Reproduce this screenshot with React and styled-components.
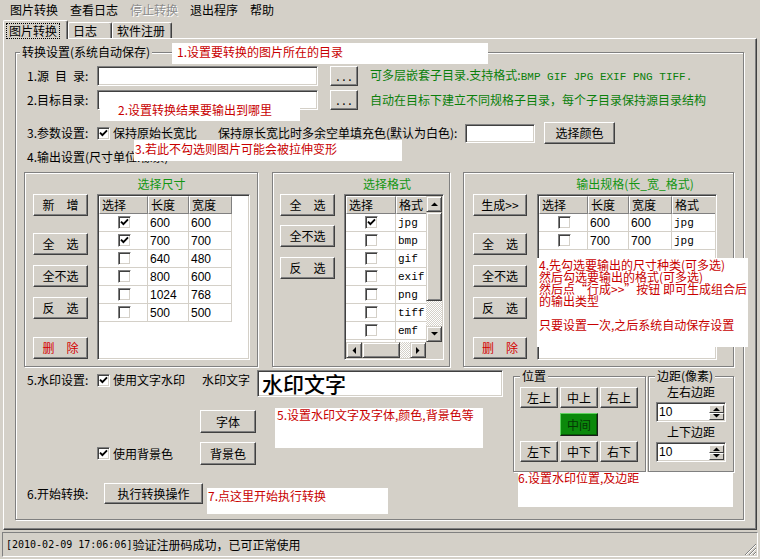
import React from 'react'
import styled, { createGlobalStyle } from 'styled-components'

const GlobalStyle = createGlobalStyle`
  html, body {
    margin: 0;
    padding: 0;
    background: #d4d0c8;
  }
  body {
    font-family: "Noto Sans CJK SC", "Liberation Sans", sans-serif;
    font-size: 12px;
    color: #000;
  }
  * { box-sizing: border-box; }
`

const Window = styled.div`
  position: relative;
  width: 760px;
  height: 559px;
  overflow: hidden;
  background: #d4d0c8;
  display: flex;
  flex-direction: column;
`

const MenuBar = styled.div`
  display: flex;
  height: 20px;
  padding-left: 4px;
`
const MenuItem = styled.div`
  padding: 0 6px;
  line-height: 20px;
  color: ${p => (p.$disabled ? '#8c8c8c' : '#000')};
  text-shadow: ${p => (p.$disabled ? '1px 1px 0 #fff' : 'none')};
`

const TabStrip = styled.div`
  display: flex;
  align-items: flex-end;
  height: 18px;
  padding-left: 3px;
  position: relative;
  z-index: 1;
`
const Tab = styled.div`
  width: ${p => p.$w}px;
  height: ${p => (p.$active ? 19 : 16)}px;
  margin-bottom: ${p => (p.$active ? -1 : 0)}px;
  padding: ${p => (p.$active ? '2px 0 0 3px' : '0 0 0 4px')};
  background: #d4d0c8;
  border-top: 1px solid #fff;
  border-left: 1px solid #fff;
  border-right: 1px solid #404040;
  border-radius: 2px 2px 0 0;
  box-shadow: inset -1px 0 0 #808080;
  line-height: 15px;
`
const Focus = styled.span`
  display: inline-block;
  outline: 1px dotted #000;
  padding: 0 2px;
  line-height: 14px;
`

const TabPage = styled.div`
  margin: 0 3px;
  height: 492px;
  border: 1px solid;
  border-color: #fff #404040 #404040 #fff;
  box-shadow: inset -1px -1px 0 #808080;
  padding: 5px 0 0 11px;
`

const Group = styled.fieldset`
  margin: 0;
  padding: 0;
  min-inline-size: 0;
  width: ${p => p.$w}px;
  height: ${p => p.$h}px;
  border: 1px solid #808080;
  box-shadow: inset 1px 1px 0 #fff, 1px 1px 0 #fff;
`
const Legend = styled.legend`
  padding: 0 2px;
  margin-left: ${p => p.$ml}px;
  line-height: 16px;
  background: #d4d0c8;
`

const Content = styled.div`
  padding: 6px 0 0 8px;
`
const Row = styled.div`
  display: flex;
  align-items: ${p => p.$align || 'center'};
  height: ${p => p.$h}px;
  margin-top: ${p => p.$mt || 0}px;
`
const Label = styled.span`
  width: ${p => p.$w || 70}px;
  margin-left: 3px;
  flex-shrink: 0;
  white-space: nowrap;
  line-height: ${p => p.$lh || 16}px;
`
const Text = styled.span`
  width: ${p => (p.$w ? `${p.$w}px` : 'auto')};
  margin-left: ${p => p.$ml || 0}px;
  margin-top: ${p => p.$mt || 0}px;
  flex-shrink: 0;
  white-space: nowrap;
  line-height: ${p => p.$lh || 16}px;
  color: ${p => (p.$green ? '#0a7f0a' : '#000')};
`
const Mono = styled.span`
  font-family: "Liberation Mono", monospace;
  font-size: 11px;
`

const Field = styled.div`
  width: ${p => p.$w}px;
  height: ${p => p.$h}px;
  margin-left: ${p => p.$ml || 0}px;
  flex-shrink: 0;
  background: #fff;
  border: 1px solid;
  border-color: #808080 #fff #fff #808080;
  box-shadow: inset 1px 1px 0 #404040, inset -1px -1px 0 #d4d0c8;
`
const BigField = styled(Field)`
  padding: 0 0 0 4px;
  font-size: 21px;
  line-height: 24px;
  font-weight: 500;
`

const Btn = styled.button`
  font: inherit;
  font-size: 12px;
  width: ${p => p.$w}px;
  height: ${p => p.$h || 22}px;
  margin-top: ${p => p.$mt || 0}px;
  margin-left: ${p => p.$ml || 0}px;
  padding: 0;
  flex-shrink: 0;
  background: ${p => (p.$green ? '#0b890b' : '#d4d0c8')};
  color: ${p => (p.$red ? '#d40000' : p.$green ? '#053805' : '#000')};
  border: 1px solid;
  border-color: ${p => (p.$green ? '#5fd35f #1b1b1b #1b1b1b #5fd35f' : '#fff #404040 #404040 #fff')};
  box-shadow: inset -1px -1px 0 ${p => (p.$green ? '#055a05' : '#808080')};
  line-height: 1;
  white-space: pre;
`

const CheckBox = styled.span`
  width: 13px;
  height: 13px;
  flex-shrink: 0;
  margin-top: ${p => p.$mt || 0}px;
  margin-left: ${p => p.$ml || 0}px;
  background: #fff;
  border: 1px solid;
  border-color: #808080 #fff #fff #808080;
  box-shadow: inset 1px 1px 0 #404040, inset -1px -1px 0 #d4d0c8;
  display: inline-flex;
  align-items: center;
  justify-content: center;
`
const Check = ({ on, mt, ml }) => (
  <CheckBox $mt={mt} $ml={ml}>
    {on && (
      <svg width="9" height="9" viewBox="0 0 9 9">
        <path d="M1 3.6 L3.4 6.2 L8 1.4" fill="none" stroke="#000" strokeWidth="1.9" />
      </svg>
    )}
  </CheckBox>
)

const Panels = styled.div`
  display: flex;
  margin-top: 6px;
  height: 195px;
`
const Panel = styled.div`
  width: ${p => p.$w}px;
  margin-left: ${p => p.$ml || 0}px;
  height: 195px;
  border: 1px solid #808080;
  box-shadow: inset 1px 1px 0 #fff, 1px 1px 0 #fff;
  display: flex;
  padding-left: ${p => p.$pl}px;
`
const BtnCol = styled.div`
  display: flex;
  flex-direction: column;
  padding-top: 21px;
  width: ${p => p.$w}px;
  margin-right: ${p => p.$gap}px;
`
const GridCol = styled.div`
  display: flex;
  flex-direction: column;
`
const PanelTitle = styled.div`
  height: 21px;
  line-height: 22px;
  color: #139613;
  text-align: center;
  white-space: nowrap;
  padding-left: ${p => (p.$shift > 0 ? p.$shift * 2 : 0)}px;
  padding-right: ${p => (p.$shift < 0 ? -p.$shift * 2 : 0)}px;
`
const GridFrame = styled.div`
  width: ${p => p.$w}px;
  height: 166px;
  background: #fff;
  border: 1px solid;
  border-color: #808080 #fff #fff #808080;
  box-shadow: inset 1px 1px 0 #404040, inset -1px -1px 0 #d4d0c8;
  padding: 1px;
  display: flex;
  flex-direction: column;
  overflow: hidden;
`
const GridBody = styled.div`
  flex: 1;
  display: flex;
  min-height: 0;
`
const TableArea = styled.div`
  flex: 1;
  overflow: hidden;
`
const TRow = styled.div`
  display: flex;
  height: 18px;
`
const HCell = styled.div`
  width: ${p => p.$w}px;
  flex-shrink: 0;
  background: #d4d0c8;
  border-top: 1px solid #fff;
  border-left: 1px solid #fff;
  border-right: 1px solid #808080;
  border-bottom: 1px solid #808080;
  padding-left: 2px;
  line-height: 16px;
  white-space: nowrap;
  overflow: hidden;
`
const Cell = styled.div`
  width: ${p => p.$w}px;
  flex-shrink: 0;
  border-right: 1px solid #d4d0c8;
  border-bottom: 1px solid #d4d0c8;
  padding-left: 2px;
  display: flex;
  align-items: center;
  justify-content: ${p => (p.$center ? 'center' : 'flex-start')};
  font-family: ${p => (p.$mono ? '"Liberation Mono", monospace' : '"Liberation Sans", sans-serif')};
  font-size: ${p => (p.$mono ? 11 : 12)}px;
`

const ScrollBtn = styled.div`
  width: 16px;
  height: ${p => p.$len || 16}px;
  flex-shrink: 0;
  background: #d4d0c8;
  border: 1px solid;
  border-color: #d4d0c8 #404040 #404040 #d4d0c8;
  box-shadow: inset 1px 1px 0 #fff, inset -1px -1px 0 #808080;
  display: flex;
  align-items: center;
  justify-content: center;
`
const HScrollBtn = styled(ScrollBtn)`
  width: ${p => p.$len || 16}px;
  height: 16px;
`
const Track = styled.div`
  flex: 1;
  background-image: repeating-conic-gradient(#fff 0 25%, #d4d0c8 0 50%);
  background-size: 2px 2px;
`
const VScroll = styled.div`
  width: 16px;
  display: flex;
  flex-direction: column;
`
const HScrollRow = styled.div`
  display: flex;
  height: 16px;
`
const HScroll = styled.div`
  flex: 1;
  display: flex;
`
const Corner = styled.div`
  width: 16px;
  background: #d4d0c8;
`

const Arrow = ({ dir }) => {
  const pts = {
    up: '0,4 7,4 3.5,0.5',
    down: '0,0 7,0 3.5,3.5',
    left: '4,0 4,7 0.5,3.5',
    right: '0,0 0,7 3.5,3.5',
  }[dir]
  const vertical = dir === 'up' || dir === 'down'
  return (
    <svg width={vertical ? 7 : 4} height={vertical ? 4 : 7}>
      <polygon points={pts} fill="#000" />
    </svg>
  )
}

const Lower = styled.div`
  display: flex;
`
const LeftCol = styled.div`
  width: 489px;
  display: flex;
  flex-direction: column;
`
const RightCol = styled.div`
  display: flex;
  gap: 2px;
  margin-top: 1px;
  align-items: flex-start;
`
const PosGrid = styled.div`
  display: grid;
  grid-template-columns: repeat(3, 38px);
  grid-template-rows: 21px 23px 21px;
  column-gap: 2px;
  row-gap: 5px;
  margin: 3px 0 0 6px;
`
const PosBtn = styled(Btn)`
  width: 38px;
  height: 100%;
  grid-column: ${p => p.$col || 'auto'};
`
const MarginBody = styled.div`
  display: flex;
  flex-direction: column;
  align-items: center;
`
const SpinBox = styled.div`
  width: 70px;
  height: 20px;
  margin-top: 2px;
  display: flex;
  background: #fff;
  border: 1px solid;
  border-color: #808080 #fff #fff #808080;
  box-shadow: inset 1px 1px 0 #404040, inset -1px -1px 0 #d4d0c8;
  padding: 2px 1px 1px 2px;
`
const SpinText = styled.div`
  flex: 1;
  line-height: 14px;
  font-family: "Liberation Sans", sans-serif;
  font-size: 12px;
`
const SpinBtns = styled.div`
  width: 15px;
  display: flex;
  flex-direction: column;
`
const SpinBtn = styled.div`
  flex: 1;
  background: #d4d0c8;
  border: 1px solid;
  border-color: #fff #404040 #404040 #fff;
  display: flex;
  align-items: center;
  justify-content: center;
`

const StatusBar = styled.div`
  margin: 2px 2px 0;
  height: 25px;
  border: 1px solid;
  border-color: #808080 #fff #fff #808080;
  display: flex;
  align-items: center;
  padding-left: 3px;
`
const StatusMono = styled.span`
  font-family: "DejaVu Sans Mono", monospace;
  font-size: 10px;
`
const Grip = styled.svg`
  margin-left: auto;
  align-self: flex-end;
`

const Note = styled.div`
  position: absolute;
  left: ${p => p.$x}px;
  top: ${p => p.$y}px;
  width: ${p => p.$w}px;
  height: ${p => p.$h}px;
  background: #fff;
  color: #c80000;
  padding: ${p => p.$pad || '0'};
  line-height: ${p => p.$lh || 16}px;
  white-space: pre;
  z-index: 5;
`

const sizes = [
  ['600', '600', true],
  ['700', '700', true],
  ['640', '480', false],
  ['800', '600', false],
  ['1024', '768', false],
  ['500', '500', false],
]
const formats = [['jpg', true], ['bmp'], ['gif'], ['exif'], ['png'], ['tiff'], ['emf'], ['']]
const outputs = [
  ['600', '600', 'jpg'],
  ['700', '700', 'jpg'],
]

const Spin = ({ value }) => (
  <SpinBox>
    <SpinText>{value}</SpinText>
    <SpinBtns>
      <SpinBtn><Arrow dir="up" /></SpinBtn>
      <SpinBtn><Arrow dir="down" /></SpinBtn>
    </SpinBtns>
  </SpinBox>
)

export default function App() {
  return (
    <Window>
      <GlobalStyle />
      <MenuBar>
        <MenuItem>图片转换</MenuItem>
        <MenuItem>查看日志</MenuItem>
        <MenuItem $disabled>停止转换</MenuItem>
        <MenuItem>退出程序</MenuItem>
        <MenuItem>帮助</MenuItem>
      </MenuBar>
      <TabStrip>
        <Tab $w={65} $active><Focus>图片转换</Focus></Tab>
        <Tab $w={44}>日志</Tab>
        <Tab $w={60}>软件注册</Tab>
      </TabStrip>
      <TabPage>
        <Group $w={729} $h={476}>
          <Legend $ml={4}>转换设置(系统自动保存)</Legend>
          <Content>
            <Row $h={20}>
              <Label>1.源{'\u2002'}目{'\u2002'}录:</Label>
              <Field $w={221} $h={20} />
              <Btn $w={28} $h={20} $ml={12}>. . .</Btn>
              <Text $ml={12} $green>
                可多层嵌套子目录.支持格式:<Mono>BMP GIF JPG EXIF PNG TIFF.</Mono>
              </Text>
            </Row>
            <Row $h={20} $mt={4}>
              <Label>2.目标目录:</Label>
              <Field $w={221} $h={20} />
              <Btn $w={28} $h={20} $ml={12}>. . .</Btn>
              <Text $ml={12} $green>自动在目标下建立不同规格子目录，每个子目录保持源目录结构</Text>
            </Row>
            <Row $h={22} $mt={12}>
              <Label>3.参数设置:</Label>
              <Check on />
              <Text $ml={3} $w={105}>保持原始长宽比</Text>
              <Text $w={247}>保持原长宽比时多余空单填充色(默认为白色):</Text>
              <Field $w={70} $h={19} />
              <Btn $w={71} $h={22} $ml={9}>选择颜色</Btn>
            </Row>
            <Row $h={18} $mt={4}>
              <Label $w={200}>4.输出设置(尺寸单位:像素)</Label>
            </Row>
            <Panels>
              <Panel $w={234} $pl={8}>
                <BtnCol $w={55} $gap={9}>
                  <Btn $w={55}>新{'\u3000'}增</Btn>
                  <Btn $w={55} $mt={17}>全{'\u3000'}选</Btn>
                  <Btn $w={55} $mt={10}>全不选</Btn>
                  <Btn $w={55} $mt={10}>反{'\u3000'}选</Btn>
                  <Btn $w={55} $mt={18} $red>删{'\u3000'}除</Btn>
                </BtnCol>
                <GridCol>
                  <PanelTitle $shift={-12}>选择尺寸</PanelTitle>
                  <GridFrame $w={153}>
                    <TableArea>
                      <TRow>
                        <HCell $w={49}>选择</HCell>
                        <HCell $w={41}>长度</HCell>
                        <HCell $w={43}>宽度</HCell>
                      </TRow>
                      {sizes.map(([l, w, on]) => (
                        <TRow key={l + w}>
                          <Cell $w={49} $center><Check on={on} /></Cell>
                          <Cell $w={41}>{l}</Cell>
                          <Cell $w={43}>{w}</Cell>
                        </TRow>
                      ))}
                    </TableArea>
                  </GridFrame>
                </GridCol>
              </Panel>
              <Panel $w={178} $ml={14} $pl={7}>
                <BtnCol $w={55} $gap={9}>
                  <Btn $w={55}>全{'\u3000'}选</Btn>
                  <Btn $w={55} $mt={9}>全不选</Btn>
                  <Btn $w={55} $mt={10}>反{'\u3000'}选</Btn>
                </BtnCol>
                <GridCol>
                  <PanelTitle $shift={-7}>选择格式</PanelTitle>
                  <GridFrame $w={100}>
                    <GridBody>
                      <TableArea>
                        <TRow>
                          <HCell $w={50}>选择</HCell>
                          <HCell $w={40}>格式</HCell>
                        </TRow>
                        {formats.map(([f, on], i) => (
                          <TRow key={i}>
                            <Cell $w={50} $center><Check on={on} /></Cell>
                            <Cell $w={40} $mono>{f}</Cell>
                          </TRow>
                        ))}
                      </TableArea>
                      <VScroll>
                        <ScrollBtn><Arrow dir="up" /></ScrollBtn>
                        <ScrollBtn $len={89} />
                        <Track />
                        <ScrollBtn><Arrow dir="down" /></ScrollBtn>
                      </VScroll>
                    </GridBody>
                    <HScrollRow>
                      <HScroll>
                        <HScrollBtn><Arrow dir="left" /></HScrollBtn>
                        <HScrollBtn $len={38} />
                        <Track />
                        <HScrollBtn><Arrow dir="right" /></HScrollBtn>
                      </HScroll>
                      <Corner />
                    </HScrollRow>
                  </GridFrame>
                </GridCol>
              </Panel>
              <Panel $w={271} $ml={13} $pl={9}>
                <BtnCol $w={54} $gap={10}>
                  <Btn $w={54}>生成&gt;&gt;</Btn>
                  <Btn $w={54} $mt={17}>全{'\u3000'}选</Btn>
                  <Btn $w={54} $mt={10}>全不选</Btn>
                  <Btn $w={54} $mt={10}>反{'\u3000'}选</Btn>
                  <Btn $w={54} $mt={18} $red>删{'\u3000'}除</Btn>
                </BtnCol>
                <GridCol>
                  <PanelTitle $shift={8}>输出规格(长_宽_格式)</PanelTitle>
                  <GridFrame $w={180}>
                    <TableArea>
                      <TRow>
                        <HCell $w={49}>选择</HCell>
                        <HCell $w={41}>长度</HCell>
                        <HCell $w={43}>宽度</HCell>
                        <HCell $w={45}>格式</HCell>
                      </TRow>
                      {outputs.map(([l, w, f]) => (
                        <TRow key={l + w + f}>
                          <Cell $w={49} $center><Check /></Cell>
                          <Cell $w={41}>{l}</Cell>
                          <Cell $w={43}>{w}</Cell>
                          <Cell $w={45} $mono>{f}</Cell>
                        </TRow>
                      ))}
                    </TableArea>
                  </GridFrame>
                </GridCol>
              </Panel>
            </Panels>
            <Lower>
              <LeftCol>
                <Row $h={27} $mt={3} $align="flex-start">
                  <Label $lh={20}>5.水印设置:</Label>
                  <Check on mt={4} />
                  <Text $ml={3} $w={89} $lh={20}>使用文字水印</Text>
                  <Text $w={55} $lh={20}>水印文字</Text>
                  <BigField $w={246} $h={27}>水印文字</BigField>
                </Row>
                <Row $h={23} $mt={13}>
                  <Btn $w={56} $h={23} $ml={176}>字体</Btn>
                </Row>
                <Row $h={23} $mt={9}>
                  <Check on ml={73} />
                  <Text $ml={3} $w={87}>使用背景色</Text>
                  <Btn $w={56} $h={23}>背景色</Btn>
                </Row>
                <Row $h={21} $mt={18}>
                  <Label $w={77}>6.开始转换:</Label>
                  <Btn $w={99} $h={21}>执行转换操作</Btn>
                </Row>
              </LeftCol>
              <RightCol>
                <Group $w={133} $h={104}>
                  <Legend $ml={6}>位置</Legend>
                  <PosGrid>
                    <PosBtn>左上</PosBtn>
                    <PosBtn>中上</PosBtn>
                    <PosBtn>右上</PosBtn>
                    <PosBtn $col={2} $green>中间</PosBtn>
                    <PosBtn $col={1}>左下</PosBtn>
                    <PosBtn>中下</PosBtn>
                    <PosBtn>右下</PosBtn>
                  </PosGrid>
                </Group>
                <Group $w={86} $h={104}>
                  <Legend $ml={6}>边距(像素)</Legend>
                  <MarginBody>
                    <Text>左右边距</Text>
                    <Spin value="10" />
                    <Text $mt={2}>上下边距</Text>
                    <Spin value="10" />
                  </MarginBody>
                </Group>
              </RightCol>
            </Lower>
          </Content>
        </Group>
      </TabPage>
      <StatusBar>
        <StatusMono>[2010-02-09 17:06:06]</StatusMono>
        <span>验证注册码成功，已可正常使用</span>
        <Grip width="14" height="14" viewBox="0 0 14 14">
          <path d="M13 2 L2 13 M13 6 L6 13 M13 10 L10 13" stroke="#808080" strokeWidth="1" />
          <path d="M13 3 L3 13 M13 7 L7 13 M13 11 L11 13" stroke="#fff" strokeWidth="1" />
        </Grip>
      </StatusBar>

      <Note $x={172} $y={43} $w={316} $h={21} $pad="1px 0 0 5px">1.设置要转换的图片所在的目录</Note>
      <Note $x={100} $y={102} $w={200} $h={19} $pad="0 0 0 18px" $lh={15}>2.设置转换结果要输出到哪里</Note>
      <Note $x={134} $y={140} $w={268} $h={21} $pad="0 0 0 1px" $lh={18}>3.若此不勾选则图片可能会被拉伸变形</Note>
      <Note $x={537} $y={258} $w={211} $h={89} $pad="1px 0 0 2px" $lh={12}>
        {'4.先勾选要输出的尺寸种类(可多选)\n然后勾选要输出的格式(可多选)\n然后点“行成>>”按钮 即可生成组合后\n的输出类型\n\n只要设置一次,之后系统自动保存设置'}
      </Note>
      <Note $x={275} $y={408} $w={208} $h={40} $pad="0 0 0 2px" $lh={14}>5.设置水印文字及字体,颜色,背景色等</Note>
      <Note $x={518} $y={472} $w={215} $h={35} $lh={12}>6.设置水印位置,及边距</Note>
      <Note $x={207} $y={488} $w={181} $h={26} $pad="0 0 0 1px" $lh={16}>7.点这里开始执行转换</Note>
    </Window>
  )
}
